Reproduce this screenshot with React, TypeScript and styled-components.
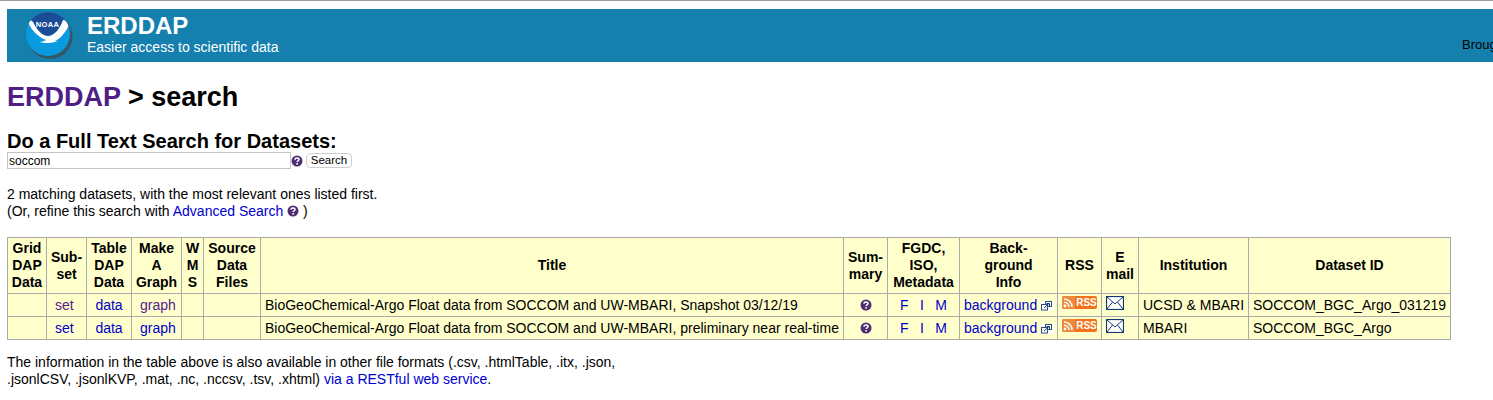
import React, { FunctionComponent } from 'react';
import styled, { createGlobalStyle } from 'styled-components';

const GlobalStyle = createGlobalStyle`
  html, body {
    margin: 0;
    padding: 0;
    background: #fff;
    overflow: hidden;
  }
  body {
    font-family: "Liberation Sans", Arial, sans-serif;
    font-size: 14px;
    color: #000;
  }
`;

const Page = styled.div`
  width: 1493px;
  height: 400px;
  overflow: hidden;
  border-top: 1px solid #a0a0a0;
  box-sizing: border-box;
  padding: 8px 0 0 7px;
`;

const Banner = styled.div`
  display: grid;
  grid-template-columns: 80px 1375px 1fr;
  height: 53px;
  background: #1580ae;
`;

const LogoCell = styled.div`
  padding: 2px 0 0 18px;
`;

const BannerText = styled.div`
  padding-top: 3px;
  color: #fff;
`;

const BannerTitle = styled.div`
  font-size: 24px;
  font-weight: bold;
  line-height: 28px;
`;

const BannerTagline = styled.div`
  font-size: 14px;
  line-height: 15px;
`;

const BannerRight = styled.div`
  padding-top: 28px;
  font-size: 13px;
  line-height: 16px;
  white-space: nowrap;
  overflow: hidden;
  color: #000;
`;

const PageTitle = styled.h1`
  margin: 18px 0 0;
  font-size: 27px;
  line-height: 34px;
  font-weight: bold;
`;

const TitleLink = styled.span`
  color: #4f1f85;
`;

const SearchTitle = styled.h2`
  margin: 15px 0 0;
  height: 23px;
  font-size: 20px;
  line-height: 24px;
  font-weight: bold;
`;

const SearchRow = styled.div`
  display: flex;
  align-items: center;
  height: 17px;
`;

const SearchInput = styled.input`
  box-sizing: border-box;
  width: 284px;
  height: 17px;
  margin: 0;
  padding: 0 1px;
  border: 1px solid #c4c4c4;
  font-family: "Liberation Sans", Arial, sans-serif;
  font-size: 12px;
  color: #000;
  outline: none;
`;

const SearchButton = styled.button`
  box-sizing: border-box;
  width: 46px;
  height: 15px;
  margin-left: 3px;
  padding: 0;
  border: 1px solid #cfcfcf;
  border-radius: 4px;
  background: #fff;
  font-family: "Liberation Sans", Arial, sans-serif;
  font-size: 11.500px;
  line-height: 13px;
  color: #000;
`;

const Message = styled.p<{ $top: number }>`
  margin: ${({ $top }) => $top}px 0 0;
  font-size: 14px;
  line-height: 17px;
`;

const Anchor = styled.a<{ $visited?: boolean }>`
  color: ${({ $visited }) => ($visited ? '#551a8b' : '#0000cc')};
  text-decoration: none;
`;

const Table = styled.table`
  margin-top: 17px;
  width: 1444px;
  table-layout: fixed;
  border-collapse: collapse;
  background: #ffffcc;
  font-size: 14px;
`;

const HeadCell = styled.th`
  border: 1px solid #aaa;
  padding: 2px 3px;
  font-size: 14px;
  line-height: 17px;
  font-weight: bold;
  text-align: center;
  vertical-align: middle;
`;

const Cell = styled.td<{ $center?: boolean; $indent?: number }>`
  border: 1px solid #aaa;
  height: 23px;
  padding: 0 4px 0 ${({ $indent }) => $indent ?? 4}px;
  box-sizing: border-box;
  line-height: 17px;
  white-space: nowrap;
  overflow: hidden;
  text-align: ${({ $center }) => ($center ? 'center' : 'left')};
`;

const MetaLinks = styled.div`
  display: flex;
  justify-content: space-between;
  padding: 0 8px;
`;

const InlineIcon = styled.svg<{ $drop?: number }>`
  display: inline-block;
  vertical-align: ${({ $drop }) => $drop ?? -2}px;
`;

const RssBadge = styled.span`
  display: inline-flex;
  align-items: center;
  box-sizing: border-box;
  width: 35px;
  height: 13px;
  vertical-align: 2px;
  background: #f3731c;
  border-radius: 2px;
  overflow: hidden;
`;

const RssLabel = styled.span`
  flex: 1;
  margin-left: 1px;
  font-size: 10px;
  line-height: 13px;
  font-weight: bold;
  color: #fff;
  text-align: center;
`;

const columns = [39, 40, 45, 50, 22, 57, 583, 44, 72, 98, 44, 37, 110, 202];

const headers = [
  ['Grid', 'DAP', 'Data'],
  ['Sub-', 'set'],
  ['Table', 'DAP', 'Data'],
  ['Make', 'A', 'Graph'],
  ['W', 'M', 'S'],
  ['Source', 'Data', 'Files'],
  ['Title'],
  ['Sum-', 'mary'],
  ['FGDC,', 'ISO,', 'Metadata'],
  ['Back-', 'ground', 'Info'],
  ['RSS'],
  ['E', 'mail'],
  ['Institution'],
  ['Dataset ID'],
];

const rows = [
  {
    title: 'BioGeoChemical-Argo Float data from SOCCOM and UW-MBARI, Snapshot 03/12/19',
    institution: 'UCSD & MBARI',
    id: 'SOCCOM_BGC_Argo_031219',
    visited: true,
  },
  {
    title: 'BioGeoChemical-Argo Float data from SOCCOM and UW-MBARI, preliminary near real-time',
    institution: 'MBARI',
    id: 'SOCCOM_BGC_Argo',
    visited: false,
  },
];

const NoaaLogo: FunctionComponent = () => (
  <svg width="49" height="49" viewBox="0 0 49 49">
    <defs>
      <clipPath id="noaa-disc">
        <circle cx="23" cy="23" r="22" />
      </clipPath>
    </defs>
    <circle cx="25" cy="25.500" r="22.500" fill="#3f4a50" opacity="0.75" />
    <g clipPath="url(#noaa-disc)">
      <rect width="46" height="46" fill="#0a9adf" />
      <path d="M0 0H46V12L38 9C35 18 29 25 23 25C17 25 12 19 8 11L2 9L0 9Z" fill="#1b4c96" />
      <path
        d="M2 9C4 8 6 9 8 11C12 19 17 25 23 25C29 25 35 18 38 9C40 9 43 11 44 14C41 21 35 28 30 30L33 30C28 32 20 33 15 31C17 31 19 30 21 29C13 26 6 19 2 9Z"
        fill="#fff"
      />
    </g>
    <text
      x="22.500"
      y="16"
      textAnchor="middle"
      fontFamily='"Liberation Sans", Arial, sans-serif'
      fontSize="7.500"
      fontWeight="bold"
      fill="#fff"
      letterSpacing="0.3"
    >
      NOAA
    </text>
  </svg>
);

const HelpIcon: FunctionComponent = () => (
  <InlineIcon $drop={-1} width="12" height="12" viewBox="0 0 12 12">
    <circle cx="6" cy="6" r="5.500" fill="#4f2c73" />
    <path d="M4 4.700C4 3.500 4.900 3 6 3C7.200 3 8 3.600 8 4.500C8 5.800 6.100 5.800 6.100 7.100" fill="none" stroke="#fff" strokeWidth="1.500" />
    <rect x="5.300" y="8" width="1.600" height="1.600" fill="#fff" />
  </InlineIcon>
);

const ExternalIcon: FunctionComponent = () => (
  <InlineIcon $drop={-1} width="13" height="10" viewBox="0 0 13 10">
    <rect width="13" height="10" fill="#fff" />
    <rect x="4.500" y="0.500" width="6" height="5" fill="#fff" stroke="#2d4f80" />
    <rect x="0.500" y="3.500" width="6" height="5.500" fill="#fff" stroke="#2d4f80" />
    <path d="M3 7L8 2.500M5.500 2.500H8.500V5" fill="none" stroke="#1d3a66" />
  </InlineIcon>
);

const RssIcon: FunctionComponent = () => (
  <RssBadge>
    <svg width="13" height="13" viewBox="0 0 13 13">
      <rect width="13" height="13" fill="#ee8a3c" />
      <circle cx="3" cy="10" r="1.400" fill="#fff" />
      <path d="M2 6.200A5 5 0 0 1 7 11M2 3A8 8 0 0 1 10 11" fill="none" stroke="#fff" strokeWidth="1.500" />
    </svg>
    <RssLabel>RSS</RssLabel>
  </RssBadge>
);

const MailIcon: FunctionComponent = () => (
  <InlineIcon $drop={0} width="18" height="14" viewBox="0 0 18 14">
    <rect x="0.500" y="0.500" width="17" height="13" fill="#fff" stroke="#13396f" strokeWidth="1.200" />
    <path d="M1 1L9 8L17 1M1 13L6.500 6M17 13L11.500 6" fill="none" stroke="#13396f" />
  </InlineIcon>
);

const App: FunctionComponent = () => {
  return (
    <Page>
      <GlobalStyle />
      <Banner>
        <LogoCell>
          <NoaaLogo />
        </LogoCell>
        <BannerText>
          <BannerTitle>ERDDAP</BannerTitle>
          <BannerTagline>Easier access to scientific data</BannerTagline>
        </BannerText>
        <BannerRight>Brought to you by NOAA</BannerRight>
      </Banner>
      <PageTitle>
        <TitleLink>ERDDAP</TitleLink> &gt; search
      </PageTitle>
      <SearchTitle>Do a Full Text Search for Datasets:</SearchTitle>
      <SearchRow>
        <SearchInput defaultValue="soccom" />
        <HelpIcon />
        <SearchButton>Search</SearchButton>
      </SearchRow>
      <Message $top={17}>2 matching datasets, with the most relevant ones listed first.</Message>
      <Message $top={0}>
        (Or, refine this search with <Anchor href="#">Advanced Search</Anchor> <HelpIcon /> )
      </Message>
      <Table>
        <colgroup>
          {columns.map((width, i) => (
            <col key={i} style={{ width }} />
          ))}
        </colgroup>
        <thead>
          <tr>
            {headers.map((lines, i) => (
              <HeadCell key={i}>
                {lines.map((line, j) => (
                  <div key={j}>{line}</div>
                ))}
              </HeadCell>
            ))}
          </tr>
        </thead>
        <tbody>
          {rows.map(row => (
            <tr key={row.id}>
              <Cell />
              <Cell $indent={8}>
                <Anchor href="#" $visited={row.visited}>set</Anchor>
              </Cell>
              <Cell $center>
                <Anchor href="#">data</Anchor>
              </Cell>
              <Cell $indent={8}>
                <Anchor href="#" $visited={row.visited}>graph</Anchor>
              </Cell>
              <Cell />
              <Cell />
              <Cell>{row.title}</Cell>
              <Cell $center>
                <HelpIcon />
              </Cell>
              <Cell $center>
                <MetaLinks>
                  <Anchor href="#">F</Anchor>
                  <Anchor href="#">I</Anchor>
                  <Anchor href="#">M</Anchor>
                </MetaLinks>
              </Cell>
              <Cell>
                <Anchor href="#">background</Anchor> <ExternalIcon />
              </Cell>
              <Cell $center>
                <RssIcon />
              </Cell>
              <Cell>
                <MailIcon />
              </Cell>
              <Cell>{row.institution}</Cell>
              <Cell>{row.id}</Cell>
            </tr>
          ))}
        </tbody>
      </Table>
      <Message $top={14}>
        The information in the table above is also available in other file formats (.csv, .htmlTable, .itx, .json,
      </Message>
      <Message $top={0}>
        .jsonlCSV, .jsonlKVP, .mat, .nc, .nccsv, .tsv, .xhtml) <Anchor href="#">via a RESTful web service</Anchor>.
      </Message>
    </Page>
  );
};

export default App;
